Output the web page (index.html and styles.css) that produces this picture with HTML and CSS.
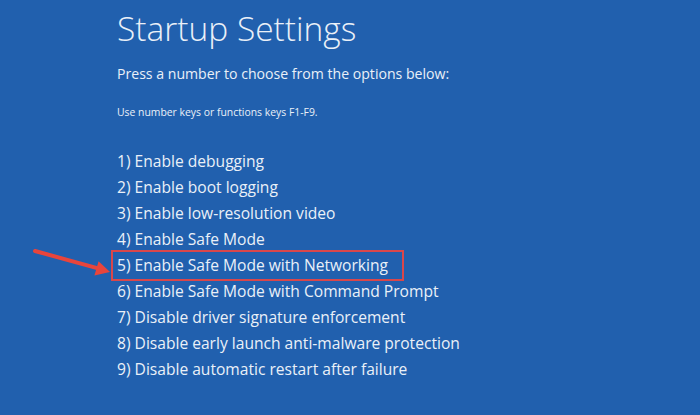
FILE: index.html
```html
<!DOCTYPE html>
<html>
<head>
<meta charset="utf-8">
<link rel="stylesheet" href="styles.css">
</head>
<body>
<div class="screen">
  <h1 class="title">Startup Settings</h1>
  <p class="lead">Press a number to choose from the options below:</p>
  <p class="hint">Use number keys or functions keys F1-F9.</p>
  <ul class="options">
    <li>1) Enable debugging</li>
    <li>2) Enable boot logging</li>
    <li>3) Enable low-resolution video</li>
    <li>4) Enable Safe Mode</li>
    <li class="picked"><span class="picked-text">5) Enable Safe Mode with Networking</span>
      <svg class="arrow" width="82" height="32" viewBox="0 0 82 32">
        <line x1="3" y1="4" x2="67" y2="21.6" stroke="#e8453c" stroke-width="4" stroke-linecap="round"/>
        <polygon points="78,25 62.4,28.4 66.6,14.2" fill="#e8453c"/>
      </svg>
    </li>
    <li>6) Enable Safe Mode with Command Prompt</li>
    <li>7) Disable driver signature enforcement</li>
    <li>8) Disable early launch anti-malware protection</li>
    <li>9) Disable automatic restart after failure</li>
  </ul>
</div>
</body>
</html>
```
FILE: styles.css
```css
html, body {
  margin: 0;
  padding: 0;
  width: 700px;
  height: 415px;
  overflow: hidden;
  background: #2160ae;
}
.screen {
  padding: 6px 0 0 117px;
  color: #eaf0f8;
  font-family: "Open Sans", "Noto Sans", sans-serif;
}
.title {
  margin: 0;
  font-weight: 300;
  font-size: 33.5px;
  line-height: 44px;
  letter-spacing: 0;
}
.lead {
  margin: 14px 0 0;
  font-size: 14.1px;
  line-height: 20px;
}
.hint {
  margin: 21px 0 0;
  font-size: 10.4px;
  line-height: 14px;
}
.options {
  list-style: none;
  margin: 29px 0 0;
  padding: 0;
  font-size: 15.6px;
  line-height: 26px;
}
.options li {
  position: relative;
}
.picked-text {
  position: relative;
  display: inline-block;
}
.picked-text::after {
  content: "";
  position: absolute;
  left: -6px;
  right: -16px;
  top: -2px;
  bottom: -3px;
  border: 2px solid #d9474b;
}
.arrow {
  position: absolute;
  left: -85px;
  top: -5px;
}
```
